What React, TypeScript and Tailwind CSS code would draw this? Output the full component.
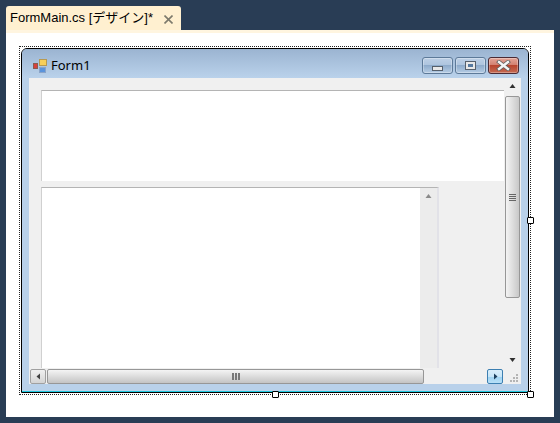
function CaptionButton({ kind }: { kind: 'min' | 'max' | 'close' }) {
  if (kind === 'close') {
    return (
      <div className="w-[31px] h-[17px] rounded-[3px] border border-[#4a2a34] flex items-center justify-center bg-[linear-gradient(#e3a598_0%,#d27f6f_48%,#b8452f_50%,#c46a52_100%)] shadow-[inset_0_0_0_1px_rgba(255,255,255,0.3)]">
        <svg width="15" height="11" viewBox="0 0 15 11">
          <path d="M3 2 L12 9 M12 2 L3 9" stroke="#5c5c5c" strokeWidth="4" strokeLinecap="square" />
          <path d="M3 2 L12 9 M12 2 L3 9" stroke="#f4f4f4" strokeWidth="2.4" strokeLinecap="square" />
        </svg>
      </div>
    )
  }
  return (
    <div className="w-[31px] h-[17px] rounded-[3px] border border-[#5d7a99] flex items-center justify-center bg-[linear-gradient(#bdd0e6_0%,#adc4de_48%,#8eabcb_50%,#b5cce4_100%)] shadow-[inset_0_0_0_1px_rgba(255,255,255,0.3)]">
      {kind === 'min' ? (
        <div className="mt-[6px] w-[11px] h-[5px] bg-[#e8e8e8] border border-[#56606c]" />
      ) : (
        <div className="w-[11px] h-[9px] bg-[#e8e8e8] border border-[#56606c] flex items-center justify-center">
          <div className="w-[5px] h-[3px] bg-[#56799f]" />
        </div>
      )}
    </div>
  )
}

function Arrow({ dir, color = '#5a5a5a' }: { dir: 'up' | 'down' | 'left' | 'right'; color?: string }) {
  const paths = {
    up: 'M0.5 5 L3.5 1 L6.5 5 Z',
    down: 'M0.5 2 L6.5 2 L3.5 6 Z',
    left: 'M5 0.5 L5 6.5 L1.5 3.5 Z',
    right: 'M2 0.5 L2 6.5 L5.5 3.5 Z',
  }
  return (
    <svg width="7" height="7" viewBox="0 0 7 7">
      <path d={paths[dir]} fill={color} />
    </svg>
  )
}

function Handle({ className }: { className: string }) {
  return <div className={`absolute w-[7px] h-[7px] bg-white border border-black rounded-[1px] ${className}`} />
}

function FormIcon() {
  return (
    <svg width="14" height="14" viewBox="0 0 14 14">
      <rect x="0.5" y="4.5" width="4" height="5" fill="#d8403a" stroke="#8a5a50" />
      <rect x="6.5" y="0.5" width="7" height="6" fill="#f7cf5a" stroke="#b89a50" />
      <rect x="6.5" y="8.5" width="6" height="5" fill="#5b94dc" stroke="#8aa4c8" />
    </svg>
  )
}

export default function App() {
  return (
    <div className="w-[560px] h-[423px] overflow-hidden bg-[#293d55] pt-[6px] px-[6px] font-['Liberation_Sans','Noto_Sans_CJK_JP',sans-serif]">
      {/* document tab */}
      <div className="w-[175px] h-[24px] bg-[#fff0d0] rounded-t-[3px] flex items-center pl-[4px] text-[13px] text-black">
        <span className="whitespace-nowrap">FormMain.cs [デザイン]*</span>
        <svg className="ml-[11px] mt-[2px]" width="9" height="9" viewBox="0 0 9 9">
          <path d="M0.5 0.5 L8.5 8.5 M8.5 0.5 L0.5 8.5" stroke="#7d7a6c" strokeWidth="1.6" />
        </svg>
      </div>
      <div className="h-[3px] w-[548px] bg-[#fff5e0]" />

      {/* design surface */}
      <div className="w-[548px] h-[384px] bg-white pt-[13px] pl-[13px]">
        <div className="relative w-[512px] h-[349px] border border-dotted border-[#222] p-px">
          <div className="w-[508px] h-[345px] border border-black rounded-t-[6px] flex flex-col overflow-hidden bg-[#b9d1ea]">
            {/* title bar */}
            <div className="h-[29px] shrink-0 flex items-center justify-between pt-[4px] pl-[11px] pr-[9px] bg-[linear-gradient(#9bb4d1,#bad2eb)]">
              <div className="flex items-center gap-[4px] text-[13px] text-black font-['Noto_Sans',sans-serif]">
                <FormIcon />
                <span>Form1</span>
              </div>
              <div className="flex gap-[2px]">
                <CaptionButton kind="min" />
                <CaptionButton kind="max" />
                <CaptionButton kind="close" />
              </div>
            </div>

            {/* client area */}
            <div className="mx-[7px] w-[492px] h-[306px] shrink-0 bg-[#f0f0f0] flex flex-col">
              <div className="flex h-[290px]">
                <div className="w-[475px] pl-[12px] pt-[12px] flex flex-col">
                  <div className="h-[91px] bg-white border-t border-l border-t-[#b4b4b4] border-l-[#d0d0d0]" />
                  <div className="mt-[6px] w-[398px] flex-1 flex border-t border-l border-r-2 border-t-[#b4b4b4] border-l-[#d0d0d0] border-r-[#e2e2e8]">
                    <div className="flex-1 bg-white" />
                    <div className="w-[17px] bg-[#ececec] pt-[5px] flex justify-center items-start">
                      <Arrow dir="up" color="#8a8a8a" />
                    </div>
                  </div>
                </div>
                {/* outer vertical scrollbar */}
                <div className="w-[16px] flex flex-col items-center pt-[5px] pb-[5px]">
                  <Arrow dir="up" color="#303030" />
                  <div className="mt-[6px] w-[15px] h-[202px] border border-[#979797] rounded-[2px] bg-[linear-gradient(90deg,#f4f4f4,#c8c8c8)] flex flex-col items-center justify-center gap-px">
                    <div className="w-[7px] h-px bg-[#666]" />
                    <div className="w-[7px] h-px bg-[#666]" />
                    <div className="w-[7px] h-px bg-[#666]" />
                    <div className="w-[7px] h-px bg-[#666]" />
                  </div>
                  <div className="mt-auto">
                    <Arrow dir="down" color="#303030" />
                  </div>
                </div>
              </div>

              {/* horizontal scrollbar */}
              <div className="h-[16px] flex items-center">
                <div className="ml-px w-[16px] h-[15px] border border-[#a0a0a0] rounded-[2px] bg-[linear-gradient(#f0f0f0,#d4d4d4)] flex items-center justify-center">
                  <Arrow dir="left" color="#404040" />
                </div>
                <div className="ml-px w-[377px] h-[15px] border border-[#979797] rounded-[2px] bg-[linear-gradient(#f4f4f4,#c4c4c4)] flex items-center justify-center gap-px">
                  <div className="w-[2px] h-[7px] bg-[#777]" />
                  <div className="w-[2px] h-[7px] bg-[#777]" />
                  <div className="w-[2px] h-[7px] bg-[#777]" />
                </div>
                <div className="ml-[63px] w-[16px] h-[15px] border border-[#3c7fb1] rounded-[2px] bg-[linear-gradient(#d9eefa_0%,#c8e6f8_50%,#9ed3f2_50%,#b8e0f7_100%)] flex items-center justify-center">
                  <Arrow dir="right" color="#1c3f5c" />
                </div>
                <svg className="ml-[5px] mt-[4px]" width="11" height="11" viewBox="0 0 11 11">
                  <g fill="#b4b4b4">
                    <rect x="8" y="1" width="2" height="2" />
                    <rect x="5" y="4" width="2" height="2" />
                    <rect x="8" y="4" width="2" height="2" />
                    <rect x="2" y="7" width="2" height="2" />
                    <rect x="5" y="7" width="2" height="2" />
                    <rect x="8" y="7" width="2" height="2" />
                  </g>
                </svg>
              </div>
            </div>
            <div className="flex-1" />
            <div className="h-px bg-[#1ec8de] shrink-0" />
          </div>
          {/* selection handles */}
          <Handle className="right-[-4px] top-[170px]" />
          <Handle className="left-[252px] bottom-[-4px]" />
          <Handle className="right-[-4px] bottom-[-4px]" />
        </div>
      </div>
    </div>
  )
}
